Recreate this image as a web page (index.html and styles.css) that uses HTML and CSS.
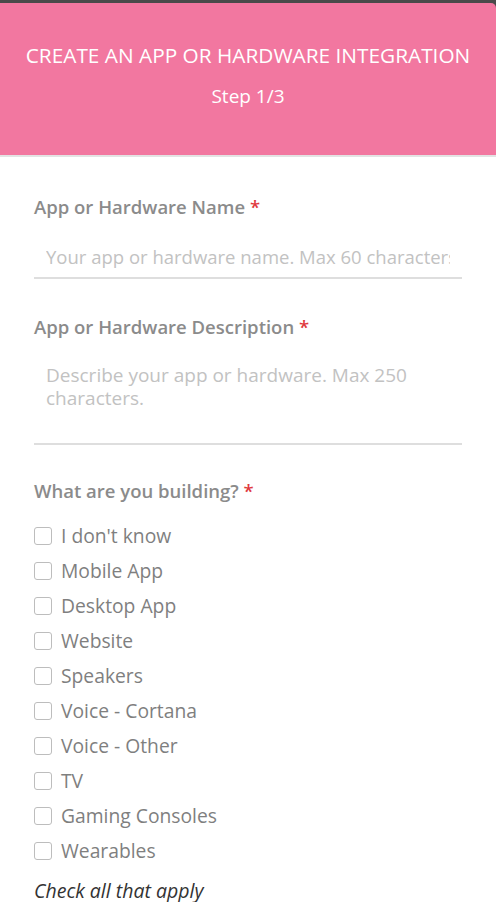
FILE: index.html
```html
<!DOCTYPE html>
<html lang="en">
<head>
<meta charset="utf-8">
<title>Create an app or hardware integration</title>
<link rel="stylesheet" href="styles.css">
</head>
<body>
<div class="frame">
  <header class="header">
    <h1 class="title">CREATE AN APP OR HARDWARE INTEGRATION</h1>
    <p class="step">Step 1/3</p>
  </header>
</div>
<form class="form">
  <div class="field">
    <label class="label">App or Hardware Name <span class="req">*</span></label>
    <div class="input"><span class="placeholder">Your app or hardware name. Max 60 characters</span></div>
  </div>
  <div class="field">
    <label class="label">App or Hardware Description <span class="req">*</span></label>
    <div class="textarea">Describe your app or hardware. Max 250 characters.</div>
  </div>
  <div class="field">
    <label class="label">What are you building? <span class="req">*</span></label>
    <ul class="checks">
      <li class="check"><span class="box"></span>I don't know</li>
      <li class="check"><span class="box"></span>Mobile App</li>
      <li class="check"><span class="box"></span>Desktop App</li>
      <li class="check"><span class="box"></span>Website</li>
      <li class="check"><span class="box"></span>Speakers</li>
      <li class="check"><span class="box"></span>Voice - Cortana</li>
      <li class="check"><span class="box"></span>Voice - Other</li>
      <li class="check"><span class="box"></span>TV</li>
      <li class="check"><span class="box"></span>Gaming Consoles</li>
      <li class="check"><span class="box"></span>Wearables</li>
    </ul>
    <p class="hint">Check all that apply</p>
  </div>
</form>
</body>
</html>
```
FILE: styles.css
```css
* { box-sizing: border-box; }
html, body { margin: 0; padding: 0; background: #fff; }
body { font-family: "Open Sans", "Noto Sans", sans-serif; }

.frame { background: #4a4a4a; padding-top: 3px; }
.header {
  background: #f277a0;
  border-top-right-radius: 5px;
  height: 152px;
  padding-top: 40px;
  text-align: center;
  color: #fff;
}
.title { margin: 0; font-size: 20.8px; font-weight: 400; line-height: 24px; white-space: nowrap; }
.step { margin: 17px 0 0; font-size: 19px; line-height: 24px; }

.form {
  border-top: 2px solid #e3e3e3;
  padding: 39px 34px 0;
}
.field { display: flex; flex-direction: column; }
.label { font-size: 18.5px; font-weight: 600; color: #8b8b8b; line-height: 22px; }
.req { color: #e0393e; }

.input {
  height: 61px;
  padding: 28px 12px 0;
  border-bottom: 2px solid #dedede;
  margin-bottom: 37px;
}
.placeholder {
  display: block;
  font-size: 18.5px; line-height: 22px;
  color: #c2c2c2;
  white-space: nowrap; overflow: hidden;
}
.textarea {
  height: 107px;
  padding: 26px 12px 0;
  border-bottom: 2px solid #dedede;
  font-size: 19px; line-height: 23px;
  color: #c2c2c2;
  margin-bottom: 35px;
}
.checks { list-style: none; margin: 23px 0 0; padding: 0; display: flex; flex-direction: column; gap: 13px; }
.check { display: flex; align-items: center; gap: 9px; font-size: 19.3px; line-height: 22px; color: #7f7f7f; font-weight: 400; }
.box { width: 18px; height: 18px; border: 1.5px solid #bdbdbd; border-radius: 3px; flex: none; }
.hint { margin: 18px 0 0; font-style: italic; font-size: 19.5px; line-height: 22px; color: #333; }
```
